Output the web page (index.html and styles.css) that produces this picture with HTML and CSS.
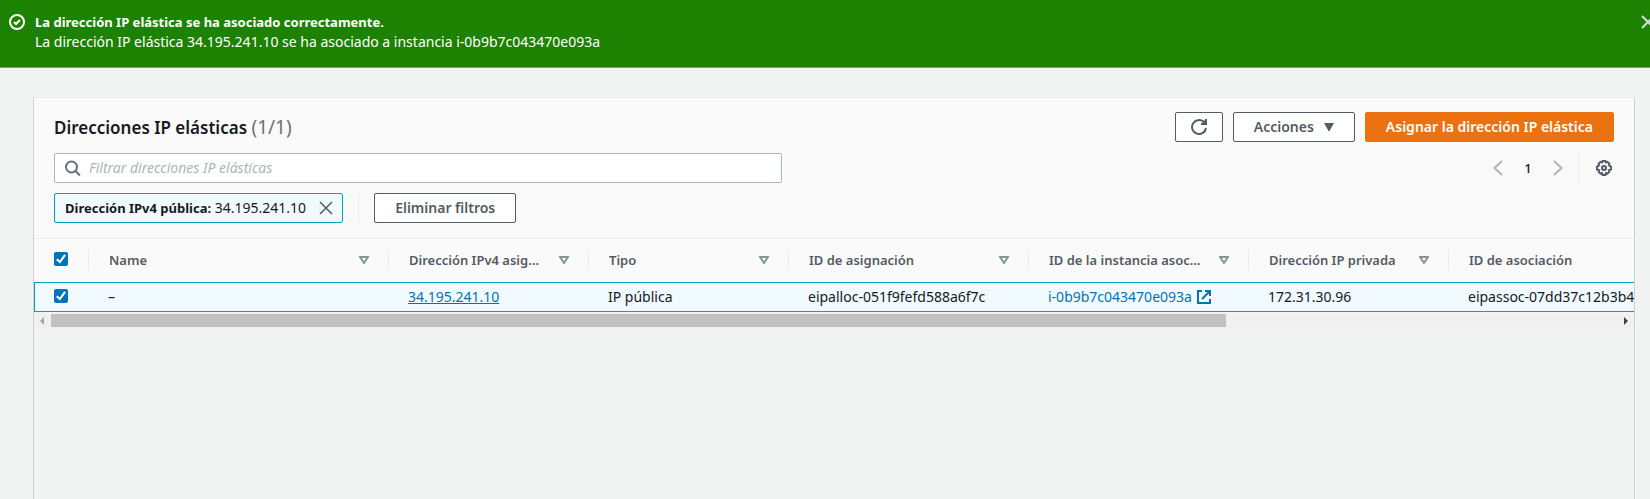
FILE: index.html
```html
<!DOCTYPE html>
<html lang="es">
<head>
<meta charset="utf-8">
<title>Direcciones IP elásticas</title>
<link rel="stylesheet" href="styles.css">
</head>
<body>
<div class="flash" role="status">
  <svg class="icon flash-icon" viewBox="0 0 16 16" aria-hidden="true"><circle cx="8" cy="8" r="7"/><path d="M5 8l2 2 4-4"/></svg>
  <div class="flash-content">
    <div class="flash-title">La dirección IP elástica se ha asociado correctamente.</div>
    <div class="flash-text">La dirección IP elástica 34.195.241.10 se ha asociado a instancia i-0b9b7c043470e093a</div>
  </div>
  <button class="icon-button flash-close" type="button" aria-label="Cerrar"><svg class="icon" viewBox="0 0 16 16"><path d="M2 2l12 12M14 2L2 14"/></svg></button>
</div>
<main class="panel">
  <header class="panel-header">
    <div class="title-row">
      <h1 class="title">Direcciones IP elásticas <span class="counter">(1/1)</span></h1>
      <div class="actions">
        <button class="button button-icon" type="button" aria-label="Actualizar"><svg class="icon" viewBox="0 0 16 16"><path d="M15 9A7 7 0 1 1 12.500 2.600L14 4"/><path d="M15 0v5h-5M12 4l2-2"/></svg></button>
        <button class="button" type="button">Acciones <svg class="caret" viewBox="0 0 10 8" aria-hidden="true"><path d="M0 0h10L5.500 8h-1z"/></svg></button>
        <button class="button button-primary" type="button">Asignar la dirección IP elástica</button>
      </div>
    </div>
    <div class="tools-row">
      <label class="search">
        <svg class="icon search-icon" viewBox="0 0 16 16" aria-hidden="true"><circle cx="6.500" cy="7" r="5.500"/><path d="M10.500 11l4.500 4.500"/></svg>
        <input class="search-input" type="text" placeholder="Filtrar direcciones IP elásticas" aria-label="Filtrar direcciones IP elásticas">
      </label>
      <div class="paging">
        <nav class="pages" aria-label="Paginación">
          <button class="icon-button page-arrow" type="button" aria-label="Página anterior"><svg class="icon" viewBox="0 0 16 16"><path d="M12 1L4.500 8l7.500 7"/></svg></button>
          <button class="icon-button page-number" type="button" aria-current="page">1</button>
          <button class="icon-button page-arrow" type="button" aria-label="Página siguiente"><svg class="icon" viewBox="0 0 16 16"><path d="M4 1l7.500 7L4 15"/></svg></button>
        </nav>
        <span class="divider"></span>
        <button class="icon-button settings" type="button" aria-label="Preferencias"><svg class="icon" viewBox="0 0 16 16"><path d="M6.600 1h2.800l.6 1.400 1.500-.5 1.900 1.900-.6 1.600 1.500.8.800.4v2.800l-2.300.7.6 1.600-1.900 1.900-1.500-.6-.6 2H6.600l-.6-2-1.500.6-1.900-1.900.6-1.600L1 9.400V6.600l2.200-1.200-.6-1.600 1.900-1.900 1.500.5z"/><circle cx="8" cy="8" r="2"/></svg></button>
      </div>
    </div>
    <div class="filters">
      <span class="token"><span><b class="token-key">Dirección IPv4 pública:</b> 34.195.241.10</span><button class="icon-button token-close" type="button" aria-label="Quitar filtro"><svg class="icon" viewBox="0 0 16 16"><path d="M2 2l12 12M14 2L2 14"/></svg></button></span>
      <span class="divider"></span>
      <button class="button" type="button">Eliminar filtros</button>
    </div>
  </header>
  <div class="table-wrap">
    <table class="table">
      <colgroup><col class="c-check"><col class="c-name"><col class="c-m"><col class="c-m"><col class="c-l"><col class="c-i"><col class="c-m"><col></colgroup>
      <thead>
        <tr>
          <th class="check"><input class="checkbox" type="checkbox" checked aria-label="Seleccionar todo"></th>
          <th><div class="head"><span class="label">Name</span><svg class="sort" viewBox="0 0 10 8"><path d="M1 1h8L5 7z"/></svg></div></th>
          <th><div class="head"><span class="label">Dirección IPv4 asig…</span><svg class="sort" viewBox="0 0 10 8"><path d="M1 1h8L5 7z"/></svg></div></th>
          <th><div class="head"><span class="label">Tipo</span><svg class="sort" viewBox="0 0 10 8"><path d="M1 1h8L5 7z"/></svg></div></th>
          <th><div class="head"><span class="label">ID de asignación</span><svg class="sort" viewBox="0 0 10 8"><path d="M1 1h8L5 7z"/></svg></div></th>
          <th><div class="head"><span class="label">ID de la instancia asoc…</span><svg class="sort" viewBox="0 0 10 8"><path d="M1 1h8L5 7z"/></svg></div></th>
          <th><div class="head"><span class="label">Dirección IP privada</span><svg class="sort" viewBox="0 0 10 8"><path d="M1 1h8L5 7z"/></svg></div></th>
          <th><div class="head"><span class="label">ID de asociación</span></div></th>
        </tr>
      </thead>
      <tbody>
        <tr>
          <td class="check"><input class="checkbox" type="checkbox" checked aria-label="Seleccionar 34.195.241.10"></td>
          <td>–</td>
          <td><a class="link link-underlined" href="#">34.195.241.10</a></td>
          <td>IP pública</td>
          <td>eipalloc-051f9fefd588a6f7c</td>
          <td><a class="link" href="#">i-0b9b7c043470e093a <svg class="external" viewBox="0 0 14 14" aria-hidden="true"><path d="M5 1H1v12h12V9M8 1h5v5M13 1L5 9"/></svg></a></td>
          <td>172.31.30.96</td>
          <td>eipassoc-07dd37c12b3b40</td>
        </tr>
      </tbody>
    </table>
  </div>
  <div class="scrollbar" aria-hidden="true">
    <svg class="scroll-arrow scroll-arrow-off" viewBox="0 0 17 14"><path d="M10 3v8L6 7z"/></svg>
    <div class="scroll-track"><div class="scroll-thumb"></div></div>
    <svg class="scroll-arrow" viewBox="0 0 17 14"><path d="M7 3v8l4-4z"/></svg>
  </div>
</main>
</body>
</html>
```
FILE: styles.css
```css
* { box-sizing: border-box; }

html, body { height: 100%; }

body {
  margin: 0;
  display: flex;
  flex-direction: column;
  overflow: hidden;
  background: #f2f3f3;
  color: #16191f;
  font: 14px/20px "Noto Sans", "Open Sans", sans-serif;
}

button, input { font: inherit; color: inherit; }

.icon {
  display: block;
  width: 16px;
  height: 16px;
  flex: none;
  fill: none;
  stroke: currentColor;
  stroke-width: 2;
}

.icon-button {
  display: flex;
  align-items: center;
  justify-content: center;
  padding: 0;
  border: 0;
  background: none;
}

.flash {
  display: flex;
  gap: 10px;
  flex: none;
  padding: 12px 0 15px 9px;
  border-bottom: 1px solid #879596;
  background: #1d8102;
  color: #fff;
  overflow: hidden;
}
.flash-icon { margin-top: 2px; }
.flash-content { flex: 1; }
.flash-title { font-size: 13px; font-weight: 700; }
.flash-close { align-self: flex-start; margin: 2px -6px 0 0; color: #d5dbdb; }

.panel {
  flex: 1;
  margin: 29px 15px 0 33px;
  border: solid #ccd1d1;
  border-width: 0 1px;
}
.panel-header {
  display: flex;
  flex-direction: column;
  gap: 10px;
  padding: 14px 20px 15px;
  border: solid #eaeded;
  border-width: 1px 0;
  background: #fafafa;
}
.title-row, .tools-row {
  display: flex;
  align-items: center;
  justify-content: space-between;
}
.title-row { padding-bottom: 1px; }
.title { margin: 0; font-size: 17px; font-weight: 600; }
.counter { color: #687078; font-size: 19px; font-weight: 400; }
.actions { display: flex; gap: 10px; }

.button {
  display: flex;
  align-items: center;
  justify-content: center;
  gap: 10px;
  height: 30px;
  padding: 0 20px;
  border: 1px solid #545b64;
  border-radius: 2px;
  background: #fff;
  color: #545b64;
  font-weight: 600;
}
.button-icon { padding: 0 15px; }
.button-primary { border-color: #ec7211; background: #ec7211; color: #fff; }
.caret { width: 10px; height: 8px; fill: currentColor; }

.search {
  display: flex;
  align-items: center;
  gap: 8px;
  width: 47%;
  max-width: 728px;
  height: 30px;
  padding: 0 10px;
  border: 1px solid #aab7b8;
  border-radius: 2px;
  background: #fff;
}
.search-icon { color: #687078; }
.search-input { flex: 1; min-width: 0; padding: 0; border: 0; outline: 0; background: none; }
.search-input::placeholder { color: #aab7b8; font-style: italic; opacity: 1; }

.paging, .pages { display: flex; align-items: center; }
.paging { padding-right: 2px; }
.page-arrow { width: 18px; color: #aab7b8; }
.page-number { width: 42px; font-size: 13px; font-weight: 500; }
.divider { width: 1px; height: 30px; background: #eaeded; }
.paging .divider { margin: 0 17px 0 11px; }
.settings { color: #545b64; }

.filters { display: flex; align-items: center; gap: 15px; }
.token {
  display: flex;
  align-items: center;
  gap: 12px;
  height: 30px;
  padding: 0 8px 0 10px;
  border: 1px solid #00a1c9;
  border-radius: 2px;
  background: #f1faff;
}
.token-key { font-size: 13px; font-weight: 700; }
.token-close { color: #545b64; }
.token-close .icon { stroke-width: 1.5; }

.table-wrap { overflow: hidden; }
.table { width: 2138px; border-collapse: separate; border-spacing: 0; table-layout: fixed; }
.c-check { width: 54px; }
.c-name { width: 300px; }
.c-m { width: 200px; }
.c-l { width: 240px; }
.c-i { width: 220px; }

th { height: 43px; padding: 0 0 2px; background: #fafafa; color: #545b64; font-size: 13px; font-weight: 600; text-align: left; }
.head { display: flex; align-items: center; gap: 10px; padding: 0 19px 0 20px; border-left: 1px solid #eaeded; }
.label { flex: 1; overflow: hidden; text-overflow: ellipsis; white-space: nowrap; }
.sort { flex: none; width: 10px; height: 8px; fill: none; stroke: #879596; stroke-width: 2; }

td {
  height: 30px;
  padding: 0 0 0 20px;
  border: solid #00a1c9;
  border-width: 1px 0;
  background: #f1faff;
  white-space: nowrap;
}
td:first-child { border-left-width: 1px; }
th.check { padding: 0 0 3px 20px; }
td.check { padding: 0 0 2px 19px; }
.checkbox {
  display: block;
  appearance: none;
  width: 14px;
  height: 14px;
  margin: 0;
  padding: 2px;
  border-radius: 2px;
  background: #0073bb;
}
.checkbox::before {
  content: "";
  display: block;
  width: 10px;
  height: 10px;
  background: #fff;
  clip-path: polygon(0 60%, 16% 44%, 38% 66%, 82% 2%, 100% 14%, 40% 96%);
}
.link { display: inline-flex; align-items: center; gap: 5px; color: #0073bb; text-decoration: none; }
.link-underlined { text-decoration: underline; }
.external { width: 14px; height: 14px; fill: none; stroke: currentColor; stroke-width: 2; }

.scrollbar { display: flex; margin-top: 2px; background: #f0f0f0; }
.scroll-arrow { flex: none; width: 17px; height: 14px; fill: #404040; }
.scroll-arrow-off { fill: #a3a3a3; }
.scroll-track { flex: 1; }
.scroll-thumb { width: 75%; height: 13px; background: #c1c1c1; }
```
